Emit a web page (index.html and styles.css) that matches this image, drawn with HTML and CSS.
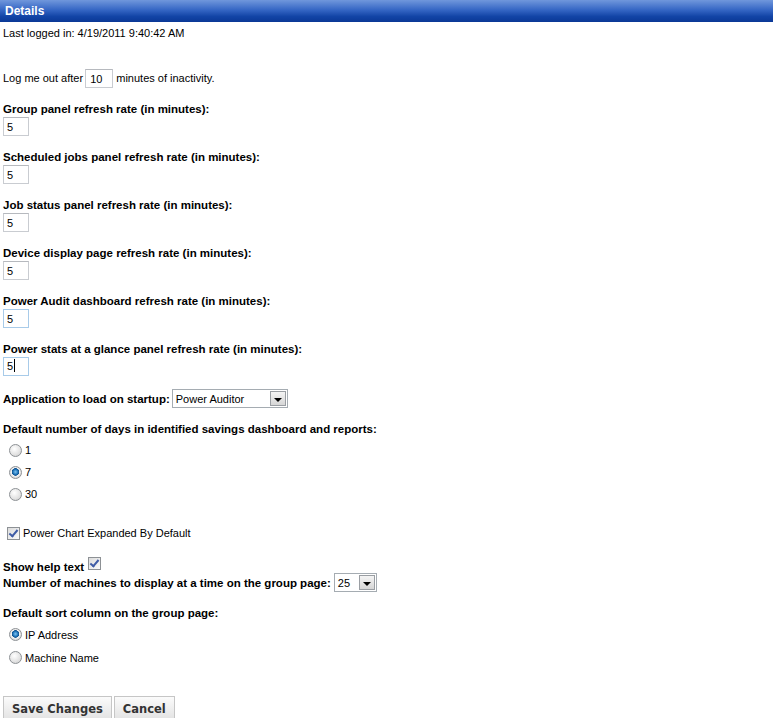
FILE: index.html
```html
<!DOCTYPE html>
<html lang="en">
<head>
    <meta charset="UTF-8">
    <title>Details</title>
    <link rel="stylesheet" href="styles.css">
</head>
<body>
    <div class="panel_title">Details</div>
    <div class="details">
        <div class="last_login">Last logged in: 4/19/2011 9:40:42 AM</div>

        <div class="logout_row">
            Log me out after <input class="txt wide" type="text" value="10"> minutes of inactivity.
        </div>

        <div class="field">
            <div class="lbl">Group panel refresh rate (in minutes):</div>
            <input class="txt" type="text" value="5">
        </div>
        <div class="field">
            <div class="lbl">Scheduled jobs panel refresh rate (in minutes):</div>
            <input class="txt" type="text" value="5">
        </div>
        <div class="field">
            <div class="lbl">Job status panel refresh rate (in minutes):</div>
            <input class="txt" type="text" value="5">
        </div>
        <div class="field">
            <div class="lbl">Device display page refresh rate (in minutes):</div>
            <input class="txt" type="text" value="5">
        </div>
        <div class="field">
            <div class="lbl">Power Audit dashboard refresh rate (in minutes):</div>
            <input class="txt hover" type="text" value="5">
        </div>
        <div class="field">
            <div class="lbl">Power stats at a glance panel refresh rate (in minutes):</div>
            <span class="txt hover caret">5</span>
        </div>

        <div class="select_row">
            <span class="lbl">Application to load on startup:</span>
            <span class="select app"><span class="val">Power Auditor</span><span class="arrow"></span></span>
        </div>

        <div class="field">
            <div class="lbl">Default number of days in identified savings dashboard and reports:</div>
        </div>
        <div class="radio_list days">
            <label class="radio"><input type="radio" name="days"> 1</label>
            <label class="radio"><input type="radio" name="days" checked> 7</label>
            <label class="radio"><input type="radio" name="days"> 30</label>
        </div>

        <label class="check_row"><input type="checkbox" checked> Power Chart Expanded By Default</label>

        <div class="help_row"><span class="lbl">Show help text</span> <input type="checkbox" checked></div>
        <div class="select_row tight">
            <span class="lbl">Number of machines to display at a time on the group page:</span>
            <span class="select small"><span class="val">25</span><span class="arrow"></span></span>
        </div>

        <div class="field">
            <div class="lbl">Default sort column on the group page:</div>
        </div>
        <div class="radio_list sort">
            <label class="radio"><input type="radio" name="sort" checked> IP Address</label>
            <label class="radio"><input type="radio" name="sort"> Machine Name</label>
        </div>

        <div class="buttons">
            <button class="btn">Save Changes</button>
            <button class="btn">Cancel</button>
        </div>
    </div>
</body>
</html>
```

FILE: styles.css
```css
body {
    margin: 0;
    padding: 0;
    font-family: "Liberation Sans", Arial, sans-serif;
    font-size: 11px;
    color: #000;
    background: #fff;
}
.panel_title {
    height: 22px;
    line-height: 22px;
    padding-left: 5px;
    color: #fff;
    font-weight: bold;
    font-size: 12px;
    background: linear-gradient(#7097dc, #3566c4 45%, #1244a6 75%, #0a3896);
}
.details {
    padding: 0 3px;
}
.last_login {
    margin-top: 4px;
    line-height: 14px;
}
.logout_row {
    margin-top: 29px;
    height: 19px;
    line-height: 19px;
}
.lbl {
    font-weight: bold;
    font-size: 11.5px;
    line-height: 16px;
}
.field {
    margin-top: 13px;
}
.txt {
    display: block;
    box-sizing: border-box;
    width: 26px;
    height: 19px;
    margin: 0;
    padding: 0 0 0 3px;
    border: 1px solid #c9ccd1;
    border-top-color: #b6b9be;
    font-family: "Liberation Sans", Arial, sans-serif;
    font-size: 11px;
    line-height: 17px;
    color: #000;
    background: #fff;
    outline: none;
}
.txt.wide {
    display: inline-block;
    vertical-align: top;
    width: 28px;
    margin: 0 0 0 -1px;
    padding-left: 4px;
}
.txt.hover {
    border-color: #a8cbe9;
}
.caret::after {
    content: "";
    display: inline-block;
    width: 1px;
    height: 13px;
    background: #000;
    vertical-align: -2px;
    margin-left: 1px;
}
.select_row {
    margin-top: 13px;
    height: 19px;
    display: flex;
    align-items: center;
}
.select_row.tight {
    margin-top: 0;
}
.select {
    display: flex;
    align-items: center;
    box-sizing: border-box;
    height: 19px;
    margin-left: 2px;
    padding: 1px;
    border: 1px solid #a5acb2;
    background: #fff;
}
.select.app {
    width: 116px;
}
.select.small {
    width: 43px;
    margin-left: 3px;
}
.select .val {
    flex: 1;
    padding-left: 2px;
}
.select .arrow {
    position: relative;
    box-sizing: border-box;
    width: 16px;
    height: 15px;
    border: 1px solid #9a9ea3;
    background: linear-gradient(#f4f4f4, #d6d6d6);
}
.select .arrow::after {
    content: "";
    position: absolute;
    left: 3px;
    top: 6px;
    border-left: 4px solid transparent;
    border-right: 4px solid transparent;
    border-top: 4px solid #000;
}
.radio_list {
    margin-top: 2px;
}
.radio_list.days .radio {
    height: 22px;
}
.radio_list.sort .radio {
    height: 23px;
}
.radio {
    display: flex;
    align-items: center;
    padding-left: 6px;
}
.radio input {
    appearance: none;
    -webkit-appearance: none;
    box-sizing: border-box;
    width: 13px;
    height: 13px;
    margin: 0 3px 0 0;
    border: 1px solid #8d9195;
    border-radius: 50%;
    background: radial-gradient(circle at 40% 35%, #fff, #e2e2e2 60%, #c9c9c9);
}
.radio input:checked {
    background: radial-gradient(circle at 50% 45%, #7fc4f2 0, #1e73b8 2.5px, #0d4f8d 3.5px, #f3f3f3 4px, #dadada 6px);
}
.check_row {
    margin-top: 18px;
    height: 20px;
    display: flex;
    align-items: center;
    padding-left: 4px;
}
input[type="checkbox"] {
    appearance: none;
    -webkit-appearance: none;
    position: relative;
    box-sizing: border-box;
    width: 13px;
    height: 13px;
    margin: 0 3px 0 0;
    border: 1px solid #8d9195;
    background: linear-gradient(135deg, #dcdcdc, #fafafa);
}
input[type="checkbox"]:checked::after {
    content: "";
    position: absolute;
    left: 3px;
    top: 0;
    width: 3px;
    height: 7px;
    border: solid #3f5ca6;
    border-width: 0 2px 2px 0;
    transform: rotate(40deg);
}
.help_row {
    margin-top: 14px;
    height: 16px;
    line-height: 16px;
}
.help_row input {
    vertical-align: 1px;
    margin-left: 1px;
}
.buttons {
    margin-top: 27px;
    display: flex;
    gap: 2px;
}
.btn {
    height: 24px;
    padding: 0 8px;
    border: 1px solid #c6c6c6;
    border-bottom: none;
    background: linear-gradient(#fbfbfb, #ececec 60%, #e2e2e2);
    font-family: "DejaVu Sans", Verdana, sans-serif;
    font-weight: bold;
    font-size: 11.5px;
    color: #333;
}
```
